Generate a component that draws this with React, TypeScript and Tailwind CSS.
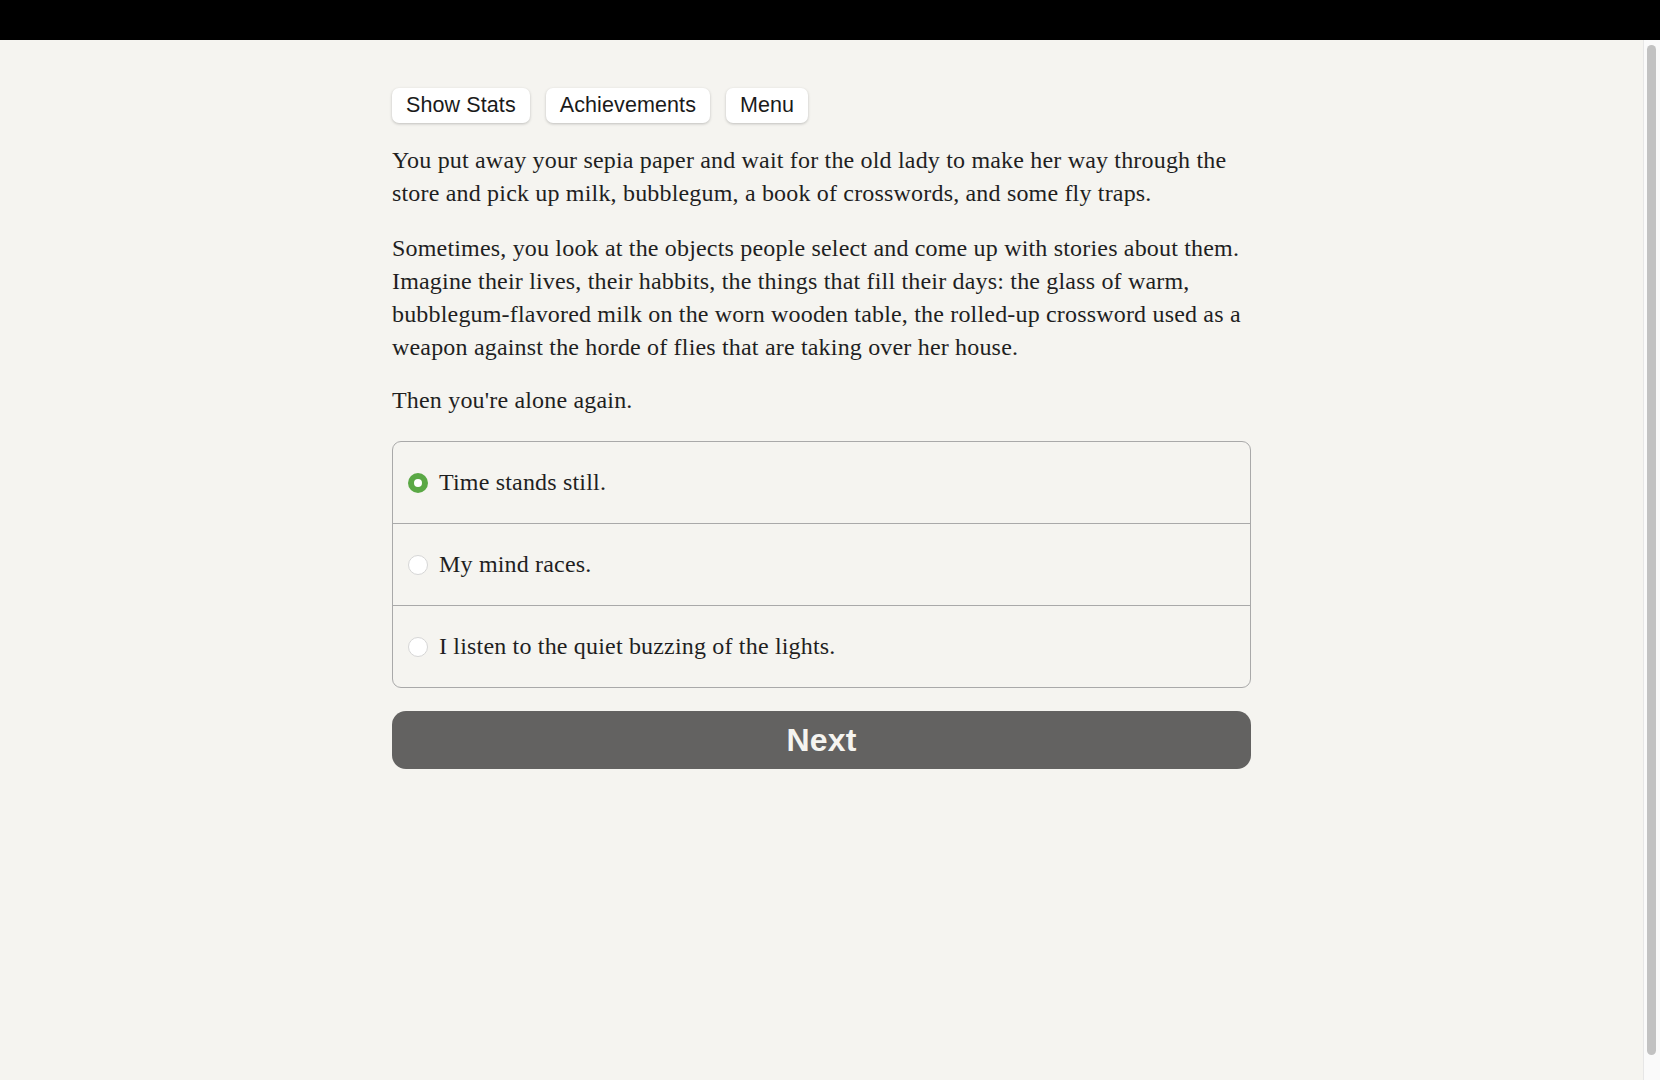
import { useState } from "react";

const choices = [
  "Time stands still.",
  "My mind races.",
  "I listen to the quiet buzzing of the lights.",
];

function TopButton({ label }: { label: string }) {
  return (
    <button className="h-[35px] px-[14px] rounded-[7px] bg-white text-[21.5px] tracking-[0.1px] text-[#1a1a1a] shadow-[0_1px_3px_rgba(0,0,0,0.22)] font-['Liberation_Sans',Arial,sans-serif]">
      {label}
    </button>
  );
}

function Radio({ checked }: { checked: boolean }) {
  if (checked) {
    return (
      <span className="w-5 h-5 rounded-full bg-[#5aa845] flex items-center justify-center shrink-0">
        <span className="w-2 h-2 rounded-full bg-white" />
      </span>
    );
  }
  return <span className="w-5 h-5 rounded-full bg-white border border-[#d6d6d6] shrink-0" />;
}

export default function App() {
  const [selected, setSelected] = useState(0);

  return (
    <div className="h-[1080px] flex flex-col bg-[#f5f4f0] overflow-hidden">
      <div className="h-10 bg-black shrink-0" />
      <div className="flex flex-1">
        <main className="flex-1">
          <div className="w-[859px] mx-auto pt-12 font-['Liberation_Serif','Times_New_Roman',serif] text-[24px] leading-[33px] tracking-[0.18px] text-[#1f1f1f]">
            <div className="flex gap-4">
              <TopButton label="Show Stats" />
              <TopButton label="Achievements" />
              <TopButton label="Menu" />
            </div>

            <p className="mt-[21px]">
              You put away your sepia paper and wait for the old lady to make her way through the
              store and pick up milk, bubblegum, a book of crosswords, and some fly traps.
            </p>
            <p className="mt-[22px]">
              Sometimes, you look at the objects people select and come up with stories about them.
              Imagine their lives, their habbits, the things that fill their days: the glass of warm,
              bubblegum-flavored milk on the worn wooden table, the rolled-up crossword used as a
              weapon against the horde of flies that are taking over her house.
            </p>
            <p className="mt-[20px]">Then you're alone again.</p>

            <div className="mt-6 border-[1.5px] border-[#a9a9a9] rounded-[9px] overflow-hidden">
              {choices.map((c, i) => (
                <label
                  key={c}
                  onClick={() => setSelected(i)}
                  className={`flex items-center gap-[11px] pl-[15px] pr-4 py-6 cursor-pointer ${
                    i > 0 ? "border-t-[1.5px] border-[#a9a9a9]" : ""
                  }`}
                >
                  <Radio checked={selected === i} />
                  <span>{c}</span>
                </label>
              ))}
            </div>

            <button className="mt-[23px] w-full h-[58px] rounded-[14px] bg-[#636261] text-[#f5f4f0] text-[32px] font-bold font-['Liberation_Sans',Arial,sans-serif]">
              Next
            </button>
          </div>
        </main>

        {/* fake overlay scrollbar */}
        <div className="w-[17px] shrink-0 bg-[#fafafa] border-l border-[#e6e6e6] pt-[5px] pb-[25px] pl-[3px] pr-[4px]">
          <div className="h-full rounded-full bg-[#c2c2c2]" />
        </div>
      </div>
    </div>
  );
}
